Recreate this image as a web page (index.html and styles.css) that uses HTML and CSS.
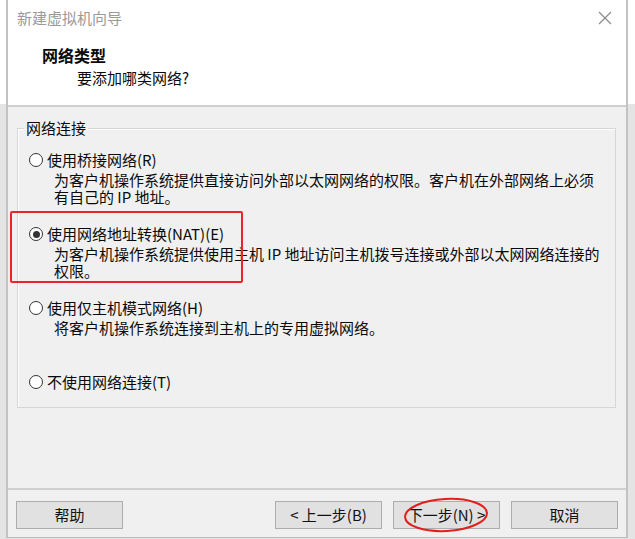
FILE: index.html
```html
<!DOCTYPE html>
<html lang="zh-CN">
<head>
<meta charset="utf-8">
<title>新建虚拟机向导</title>
<link rel="stylesheet" href="styles.css">
</head>
<body>
<div class="window">
  <div class="titlebar">
    <span class="title">新建虚拟机向导</span>
    <svg class="close" width="14" height="14" viewBox="0 0 14 14"><path d="M1 1L13 13M13 1L1 13" stroke="#8a8a8a" stroke-width="1.2" fill="none"/></svg>
  </div>
  <div class="header">
    <div class="h-title">网络类型</div>
    <div class="h-sub">要添加哪类网络?</div>
  </div>
  <div class="body">
    <fieldset class="group">
      <legend class="legend">网络连接</legend>
      <div class="option">
        <div class="opt-label"><span class="radio"></span>使用桥接网络(R)</div>
        <div class="opt-desc"><div class="line">为客户机操作系统提供直接访问外部以太网网络的权限。客户机在外部网络上必须</div><div class="line">有自己的 IP 地址。</div></div>
      </div>
      <div class="option">
        <div class="opt-label"><span class="radio checked"></span>使用网络地址转换(NAT)(E)</div>
        <div class="opt-desc"><div class="line">为客户机操作系统提供使用主机 IP 地址访问主机拨号连接或外部以太网网络连接的</div><div class="line">权限。</div></div>
      </div>
      <div class="option">
        <div class="opt-label"><span class="radio"></span>使用仅主机模式网络(H)</div>
        <div class="opt-desc"><div class="line">将客户机操作系统连接到主机上的专用虚拟网络。</div></div>
      </div>
      <div class="option">
        <div class="opt-label"><span class="radio"></span>不使用网络连接(T)</div>
      </div>
    </fieldset>
    <div class="mark-rect"></div>
  </div>
  <div class="footer">
    <button class="btn">帮助</button>
    <div class="spacer"></div>
    <button class="btn">&lt; 上一步(B)</button>
    <button class="btn">下一步(N) &gt;</button>
    <button class="btn">取消</button>
    <svg class="mark-ellipse" width="90" height="40" viewBox="0 0 90 40"><ellipse cx="45" cy="20" rx="41" ry="16" transform="rotate(-3 45 20)" fill="none" stroke="#e0201c" stroke-width="2"/></svg>
  </div>
</div>
</body>
</html>
```
FILE: styles.css
```css
html, body {
  margin: 0;
  padding: 0;
}
body {
  width: 635px;
  height: 539px;
  overflow: hidden;
  background: linear-gradient(to bottom, #ffffff 0, #ffffff 104px, #e4e4e4 104px);
  font-family: "Noto Sans CJK SC", "Noto Sans", sans-serif;
  font-size: 15px;
  color: #0a0a0a;
}
.window {
  position: relative;
  margin-left: 6px;
  width: 618px;
  height: 537px;
  border-left: 2px solid #c3c3c3;
  border-right: 2px solid #c3c3c3;
  border-bottom: 1px solid #b8b8b8;
  background: #f0f0f0;
  display: flex;
  flex-direction: column;
}
.titlebar {
  height: 36px;
  background: #fff;
  display: flex;
  align-items: center;
  justify-content: space-between;
  padding: 0 14px 0 9px;
}
.title {
  color: #9a9a9a;
  font-size: 15px;
  line-height: 20px;
}
.close {
  display: block;
}
.header {
  background: #fff;
  border-bottom: 2px solid #cfcfcf;
  padding-left: 34px;
  box-sizing: border-box;
  height: 71px;
  padding-top: 8px;
}
.h-title {
  font-weight: bold;
  font-size: 16px;
  line-height: 22px;
}
.h-sub {
  padding-left: 35px;
  line-height: 22px;
  margin-top: 1px;
}
.body {
  position: relative;
  flex: 1;
  padding: 11px 10px 0 9px;
}
.group {
  margin: 0;
  padding: 12px 0 0 11px;
  height: 290px;
  box-sizing: border-box;
  border: 1px solid #d6d6d6;
  box-shadow: inset 1px 1px 0 #ffffff;
  min-width: 0;
}
.legend {
  padding: 0 2px;
  margin-left: -5px;
  line-height: 20px;
}
.option {
  height: 74px;
}
.opt-label {
  display: flex;
  align-items: center;
  line-height: 20px;
}
.radio {
  width: 12px;
  height: 12px;
  border: 1.3px solid #333;
  border-radius: 50%;
  background: #fff;
  margin-right: 4px;
  position: relative;
  flex: none;
}
.radio.checked::after {
  content: "";
  position: absolute;
  left: 2.5px;
  top: 2.5px;
  width: 7px;
  height: 7px;
  border-radius: 50%;
  background: #333;
}
.opt-desc {
  padding-left: 25px;
  margin-top: 1px;
  white-space: nowrap;
}
.line {
  height: 17px;
  line-height: 17px;
}
.mark-rect {
  position: absolute;
  left: 2px;
  top: 104px;
  width: 229px;
  height: 68px;
  border: 2px solid #e8262a;
  border-radius: 2px;
}
.footer {
  position: relative;
  height: 49px;
  box-sizing: border-box;
  border-top: 2px solid #cfcfcf;
  display: flex;
  align-items: flex-start;
  padding: 11px 8px 0 8px;
  gap: 11px;
}
.spacer {
  flex: 1;
}
.btn {
  width: 107px;
  height: 28px;
  background: #e1e1e1;
  border: 1px solid #adadad;
  font-family: "Noto Sans CJK SC", "Noto Sans", sans-serif;
  font-size: 15px;
  color: #111;
  padding: 0;
  line-height: 24px;
}
.mark-ellipse {
  position: absolute;
  left: 393px;
  top: 5px;
}
```
